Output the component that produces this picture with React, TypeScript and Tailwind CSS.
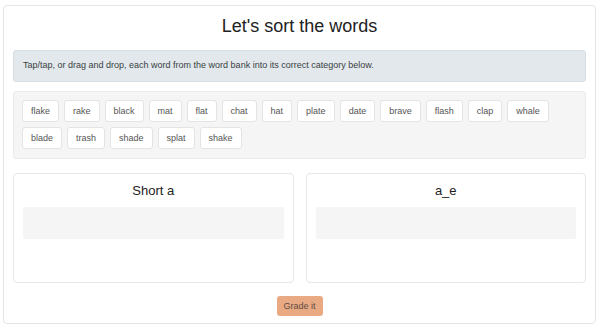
import React from 'react';

const wordBank = [
  'flake', 'rake', 'black', 'mat', 'flat', 'chat', 'hat', 'plate', 'date',
  'brave', 'flash', 'clap', 'whale', 'blade', 'trash', 'shade', 'splat', 'shake',
];

const categories = ['Short a', 'a_e'];

const WordChip: React.FC<{ word: string }> = ({ word }) => (
  <button className="h-[22px] px-2 bg-white border border-[#e4e4e4] rounded-[3px] text-[9px] text-[#555] leading-none">
    {word}
  </button>
);

const CategoryBox: React.FC<{ title: string }> = ({ title }) => (
  <div className="h-[110px] border border-[#e6e6e6] rounded-[4px] px-[9px] pt-[8px]">
    <h3 className="text-center text-[13px] leading-[18px] text-[#222]">{title}</h3>
    <div className="mt-[7px] h-[32px] bg-[#f5f5f5] rounded-[2px]" />
  </div>
);

export default function App() {
  return (
    <div className="w-[600px] h-[333px] bg-white pt-[5px] px-[3px] font-['Liberation_Sans',Arial,sans-serif]">
      <div className="w-[593px] h-[319px] border border-[#e5e5e5] rounded-[4px] px-[9px] pt-[6px]">
        <h1 className="text-center text-[18px] leading-[28px] text-[#222]">Let's sort the words</h1>

        <div className="mt-[10px] h-[32px] flex items-center px-[9px] bg-[#e2e8eb] border border-[#d6dfe3] rounded-[3px] text-[9px] text-[#3a3f44]">
          Tap/tap, or drag and drop, each word from the word bank into its correct category below.
        </div>

        <div className="mt-[9px] h-[68px] bg-[#f5f5f5] border border-[#ebebeb] rounded-[3px] px-[8px] pt-[8px] flex flex-wrap content-start gap-x-[5px] gap-y-[5px]">
          {wordBank.map((w) => (
            <WordChip key={w} word={w} />
          ))}
        </div>

        <div className="mt-[14px] grid grid-cols-2 gap-x-[12px]">
          {categories.map((c) => (
            <CategoryBox key={c} title={c} />
          ))}
        </div>

        <div className="mt-[13px] flex justify-center">
          <button className="w-[46px] h-[20px] bg-[#e9a982] rounded-[3px] text-[9px] text-[#5e4d44] leading-none">
            Grade it
          </button>
        </div>
      </div>
    </div>
  );
}
